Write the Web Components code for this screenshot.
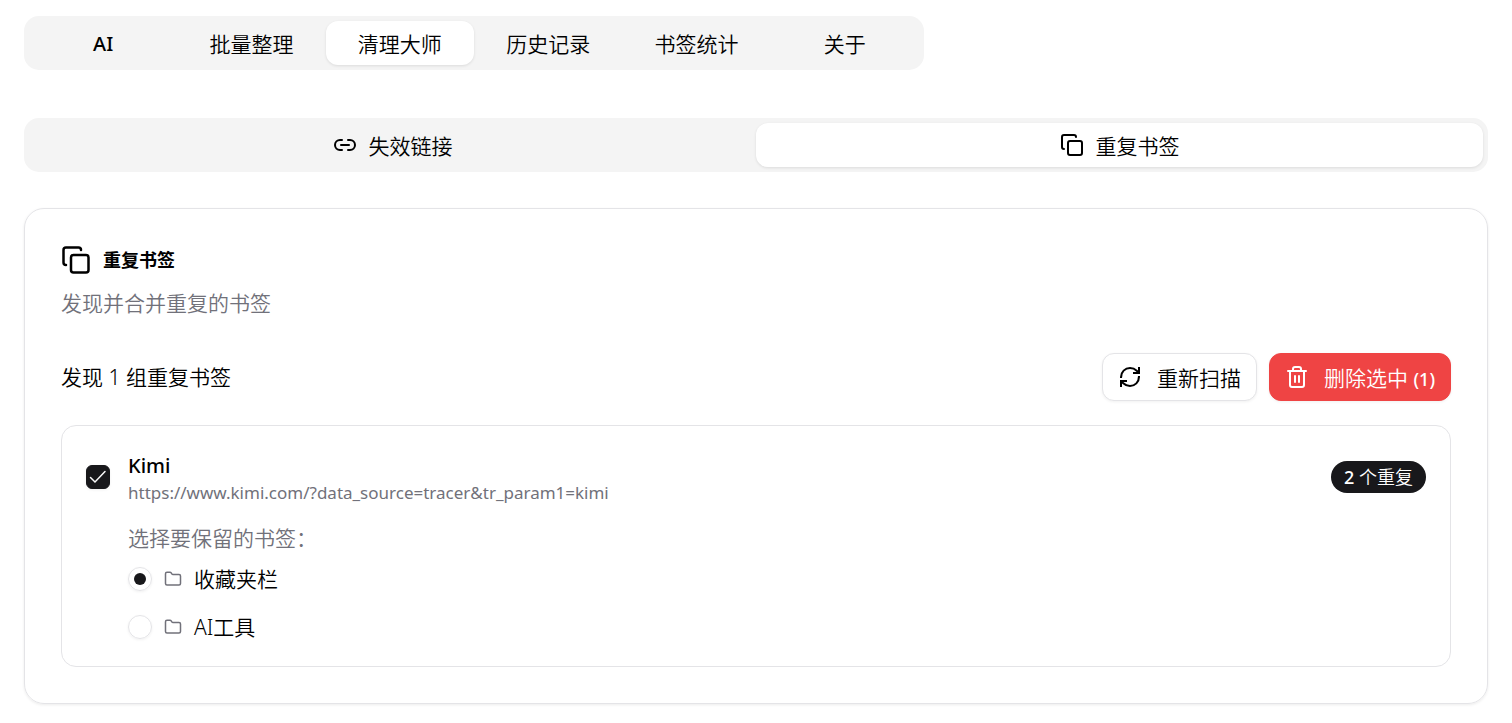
<!DOCTYPE html>
<html lang="zh-CN">
<head>
<meta charset="UTF-8">
<meta name="viewport" content="width=device-width, initial-scale=1.0">
<title>清理大师</title>
<style>
    :root {
        --foreground: #000;
        --muted: #f4f4f4;
        --muted-foreground: #71717a;
        --border: #e4e4e7;
        --primary: #18181b;
        --destructive: #ef4444;
        --shadow: 0 1px 3px rgba(0, 0, 0, 0.1);
    }

    body {
        margin: 0;
        background: #fff;
        color: var(--foreground);
        font-family: "Noto Sans", "Noto Sans CJK SC", sans-serif;
        font-size: 21px;
        font-weight: 350;
        line-height: 30px;
    }
</style>
</head>
<body>
<cleaner-page></cleaner-page>

<script>
const ICONS = {
    link: '<path d="M9 17H7A5 5 0 0 1 7 7h2"/><path d="M15 7h2a5 5 0 1 1 0 10h-2"/><path d="M8 12h8"/>',
    copy: '<rect x="8" y="8" width="14" height="14" rx="2"/><path d="M4 16c-1.1 0-2-.9-2-2V4c0-1.1.9-2 2-2h10c1.1 0 2 .9 2 2"/>',
    refresh: '<g stroke-linecap="square" stroke-linejoin="miter"><path d="M3 12a9 9 0 0 1 9-9 9.75 9.75 0 0 1 6.74 2.74L20.5 7.5"/><path d="M21 3v5h-5"/><path d="M21 12a9 9 0 0 1-9 9 9.75 9.75 0 0 1-6.74-2.74L3.5 16.5"/><path d="M8 16H3v5"/></g>',
    trash: '<path d="M3 6h18"/><path d="M19 6v14c0 1-1 2-2 2H7c-1 0-2-1-2-2V6"/><path d="M8 6V4c0-1 1-2 2-2h4c1 0 2 1 2 2v2"/><path d="M10 11v6"/><path d="M14 11v6"/>',
    folder: '<path d="M20 20a2 2 0 0 0 2-2V8a2 2 0 0 0-2-2h-7.9a2 2 0 0 1-1.69-.9L9.6 3.9A2 2 0 0 0 7.93 3H4a2 2 0 0 0-2 2v13a2 2 0 0 0 2 2Z"/>'
};

class UiIcon extends HTMLElement {
    constructor() {
        super();
        this.attachShadow({ mode: 'open' });
    }

    connectedCallback() {
        this.shadowRoot.innerHTML = `
            <style>
                :host {
                    display: block;
                    flex: none;
                    width: var(--icon-size, 24px);
                    height: var(--icon-size, 24px);
                }

                svg {
                    display: block;
                    width: 100%;
                    height: 100%;
                }
            </style>
            <svg viewBox="0 0 24 24" fill="none" stroke="currentColor" stroke-width="2" stroke-linecap="round" stroke-linejoin="round" aria-hidden="true">${ICONS[this.getAttribute('name')]}</svg>
        `;
    }
}

class TabBar extends HTMLElement {
    constructor() {
        super();
        this.attachShadow({ mode: 'open' });
        this.shadowRoot.innerHTML = `
            <style>
                :host {
                    display: grid;
                    grid-auto-flow: column;
                    grid-auto-columns: 1fr;
                    padding: 5px;
                    border-radius: 15px;
                    background: var(--muted);
                }
            </style>
            <slot></slot>
        `;
    }

    connectedCallback() {
        this.setAttribute('role', 'tablist');
        this.addEventListener('click', e => {
            const tab = e.target.closest('tab-item');
            if (!tab) return;
            this.querySelectorAll('tab-item').forEach(t => t.toggleAttribute('active', t === tab));
        });
    }
}

class TabItem extends HTMLElement {
    static observedAttributes = ['active'];

    constructor() {
        super();
        this.attachShadow({ mode: 'open' });
        this.shadowRoot.innerHTML = `
            <style>
                :host {
                    display: block;
                }

                button {
                    display: flex;
                    align-items: center;
                    justify-content: center;
                    gap: 12px;
                    width: 100%;
                    height: 44px;
                    padding: 0 16px;
                    border: 0;
                    border-radius: 12px;
                    background: transparent;
                    color: inherit;
                    font: inherit;
                    white-space: nowrap;
                    cursor: pointer;
                }

                .label {
                    padding-top: 2px;
                }

                :host([active]) button {
                    background: #fff;
                    box-shadow: var(--shadow);
                }
            </style>
            <button type="button" role="tab" aria-selected="false"><slot name="icon"></slot><span class="label"><slot></slot></span></button>
        `;
    }

    attributeChangedCallback() {
        this.shadowRoot.querySelector('button').setAttribute('aria-selected', this.hasAttribute('active'));
    }
}

class ActionButton extends HTMLElement {
    constructor() {
        super();
        this.attachShadow({ mode: 'open' });
        this.shadowRoot.innerHTML = `
            <style>
                :host {
                    display: block;
                }

                button {
                    display: flex;
                    align-items: center;
                    gap: 15px;
                    height: 48px;
                    padding: 0 15px;
                    border: 1px solid var(--border);
                    border-radius: 12px;
                    background: #fff;
                    box-shadow: 0 1px 3px rgba(0, 0, 0, 0.06);
                    color: inherit;
                    font: inherit;
                    white-space: nowrap;
                    cursor: pointer;
                }

                .label {
                    padding-top: 2px;
                }

                :host([variant="destructive"]) button {
                    border-color: var(--destructive);
                    background: var(--destructive);
                    color: #fff;
                }
            </style>
            <button type="button"><slot name="icon"></slot><span class="label"><slot></slot></span></button>
        `;
    }
}

class CountBadge extends HTMLElement {
    constructor() {
        super();
        this.attachShadow({ mode: 'open' });
        this.shadowRoot.innerHTML = `
            <style>
                :host {
                    display: block;
                    flex: none;
                    padding: 0 13px;
                    border-radius: 16px;
                    background: var(--primary);
                    color: #fff;
                    font-size: 18px;
                    line-height: 32px;
                }
            </style>
            <slot></slot>
        `;
    }
}

class FolderOption extends HTMLElement {
    constructor() {
        super();
        this.attachShadow({ mode: 'open' });
    }

    connectedCallback() {
        this.shadowRoot.innerHTML = `
            <style>
                :host {
                    display: block;
                }

                label {
                    display: flex;
                    align-items: center;
                    gap: 12px;
                    cursor: pointer;
                }

                input {
                    appearance: none;
                    display: grid;
                    place-items: center;
                    flex: none;
                    width: 24px;
                    height: 24px;
                    margin: 0;
                    border: 1px solid var(--border);
                    border-radius: 50%;
                    box-shadow: 0 1px 3px rgba(0, 0, 0, 0.06);
                }

                input:checked::before {
                    content: "";
                    width: 12px;
                    height: 12px;
                    border-radius: 50%;
                    background: var(--primary);
                }

                ui-icon {
                    --icon-size: 18px;
                    color: var(--muted-foreground);
                }
            </style>
            <label>
                <input type="radio" name="keep" ${this.hasAttribute('checked') ? 'checked' : ''}>
                <ui-icon name="folder"></ui-icon>
                <span><slot></slot></span>
            </label>
        `;
        this.input = this.shadowRoot.querySelector('input');
        // radios in separate shadow roots do not share a group
        this.input.addEventListener('change', () => {
            this.parentElement.querySelectorAll('folder-option').forEach(o => {
                if (o !== this) o.input.checked = false;
            });
        });
    }
}

class DuplicateGroup extends HTMLElement {
    constructor() {
        super();
        this.attachShadow({ mode: 'open' });
    }

    connectedCallback() {
        this.shadowRoot.innerHTML = `
            <style>
                :host {
                    display: block;
                    padding: 24px;
                    border: 1px solid var(--border);
                    border-radius: 15px;
                }

                .summary {
                    display: flex;
                    align-items: center;
                    gap: 18px;
                }

                .check {
                    display: grid;
                    flex: none;
                }

                .check input,
                .check svg {
                    grid-area: 1 / 1;
                    width: 24px;
                    height: 24px;
                    margin: 0;
                }

                .check input {
                    appearance: none;
                    border: 1px solid var(--primary);
                    border-radius: 6px;
                    box-shadow: 0 1px 3px rgba(0, 0, 0, 0.06);
                }

                .check input:checked {
                    background: var(--primary);
                }

                .check svg {
                    pointer-events: none;
                }

                .check input:not(:checked) + svg {
                    visibility: hidden;
                }

                .text {
                    flex: 1;
                    min-width: 0;
                }

                .name {
                    display: block;
                    font-size: 20px;
                    font-weight: 500;
                    line-height: 32px;
                }

                .url {
                    overflow: hidden;
                    color: var(--muted-foreground);
                    font-size: 17px;
                    font-weight: 400;
                    line-height: 22px;
                    text-overflow: ellipsis;
                    white-space: nowrap;
                }

                fieldset {
                    min-width: 0;
                    margin: 19px 0 0 42px;
                    padding: 0;
                    border: 0;
                }

                legend {
                    padding: 0;
                    margin-bottom: 11px;
                    color: var(--muted-foreground);
                }

                .options {
                    display: grid;
                    gap: 18px;
                }
            </style>
            <div class="summary">
                <span class="check">
                    <input type="checkbox" id="pick" checked>
                    <svg viewBox="0 0 24 24" fill="none" stroke="#fafafa" stroke-width="1.5" stroke-linecap="round" aria-hidden="true"><path d="M4.5 12.5L9 17L19 6.5"/></svg>
                </span>
                <div class="text">
                    <label class="name" for="pick">${this.getAttribute('name')}</label>
                    <div class="url"><slot name="url"></slot></div>
                </div>
                <slot name="badge"></slot>
            </div>
            <fieldset>
                <legend>选择要保留的书签：</legend>
                <div class="options"><slot></slot></div>
            </fieldset>
        `;
    }
}

class PanelCard extends HTMLElement {
    constructor() {
        super();
        this.attachShadow({ mode: 'open' });
        this.shadowRoot.innerHTML = `
            <style>
                :host {
                    display: block;
                    padding: 36px;
                    border: 1px solid var(--border);
                    border-radius: 20px;
                    box-shadow: 0 1px 3px rgba(0, 0, 0, 0.08);
                }

                h2 {
                    display: flex;
                    align-items: center;
                    gap: 12px;
                    margin: 0 0 13px;
                    font-size: 18px;
                    font-weight: 700;
                    --icon-size: 30px;
                }

                p {
                    margin: 0 0 35px;
                    color: var(--muted-foreground);
                }
            </style>
            <h2><slot name="icon"></slot><slot name="title"></slot></h2>
            <p><slot name="description"></slot></p>
            <slot></slot>
        `;
    }
}

class CleanerPage extends HTMLElement {
    constructor() {
        super();
        this.attachShadow({ mode: 'open' });
        this.shadowRoot.innerHTML = `
            <style>
                :host {
                    display: block;
                    padding: 16px 24px;
                }

                .main-tabs {
                    max-width: 890px;
                    margin-bottom: 48px;
                }

                .sub-tabs {
                    margin-bottom: 36px;
                }

                .toolbar {
                    display: flex;
                    align-items: center;
                    justify-content: space-between;
                    margin-bottom: 24px;
                }

                .actions {
                    display: flex;
                    gap: 12px;
                }

                .latin {
                    font-size: 20px;
                    font-weight: 500;
                }

                .count {
                    font-size: 18px;
                    font-weight: 500;
                }
            </style>

            <tab-bar class="main-tabs">
                <tab-item class="latin">AI</tab-item>
                <tab-item>批量整理</tab-item>
                <tab-item active>清理大师</tab-item>
                <tab-item>历史记录</tab-item>
                <tab-item>书签统计</tab-item>
                <tab-item>关于</tab-item>
            </tab-bar>

            <tab-bar class="sub-tabs">
                <tab-item><ui-icon slot="icon" name="link"></ui-icon>失效链接</tab-item>
                <tab-item active><ui-icon slot="icon" name="copy"></ui-icon>重复书签</tab-item>
            </tab-bar>

            <panel-card>
                <ui-icon slot="icon" name="copy"></ui-icon>
                <span slot="title">重复书签</span>
                <span slot="description">发现并合并重复的书签</span>
                <div class="toolbar">
                    <span>发现 1 组重复书签</span>
                    <div class="actions">
                        <action-button><ui-icon slot="icon" name="refresh"></ui-icon>重新扫描</action-button>
                        <action-button variant="destructive"><ui-icon slot="icon" name="trash"></ui-icon>删除选中 <span class="count">(1)</span></action-button>
                    </div>
                </div>
                <duplicate-group name="Kimi">
                    <span slot="url">https://www.kimi.com/?data_source=tracer&amp;tr_param1=kimi</span>
                    <count-badge slot="badge"><span class="count">2</span> 个重复</count-badge>
                    <folder-option checked>收藏夹栏</folder-option>
                    <folder-option>AI工具</folder-option>
                </duplicate-group>
            </panel-card>
        `;
    }
}

customElements.define('ui-icon', UiIcon);
customElements.define('tab-bar', TabBar);
customElements.define('tab-item', TabItem);
customElements.define('action-button', ActionButton);
customElements.define('count-badge', CountBadge);
customElements.define('folder-option', FolderOption);
customElements.define('duplicate-group', DuplicateGroup);
customElements.define('panel-card', PanelCard);
customElements.define('cleaner-page', CleanerPage);
</script>
</body>
</html>
